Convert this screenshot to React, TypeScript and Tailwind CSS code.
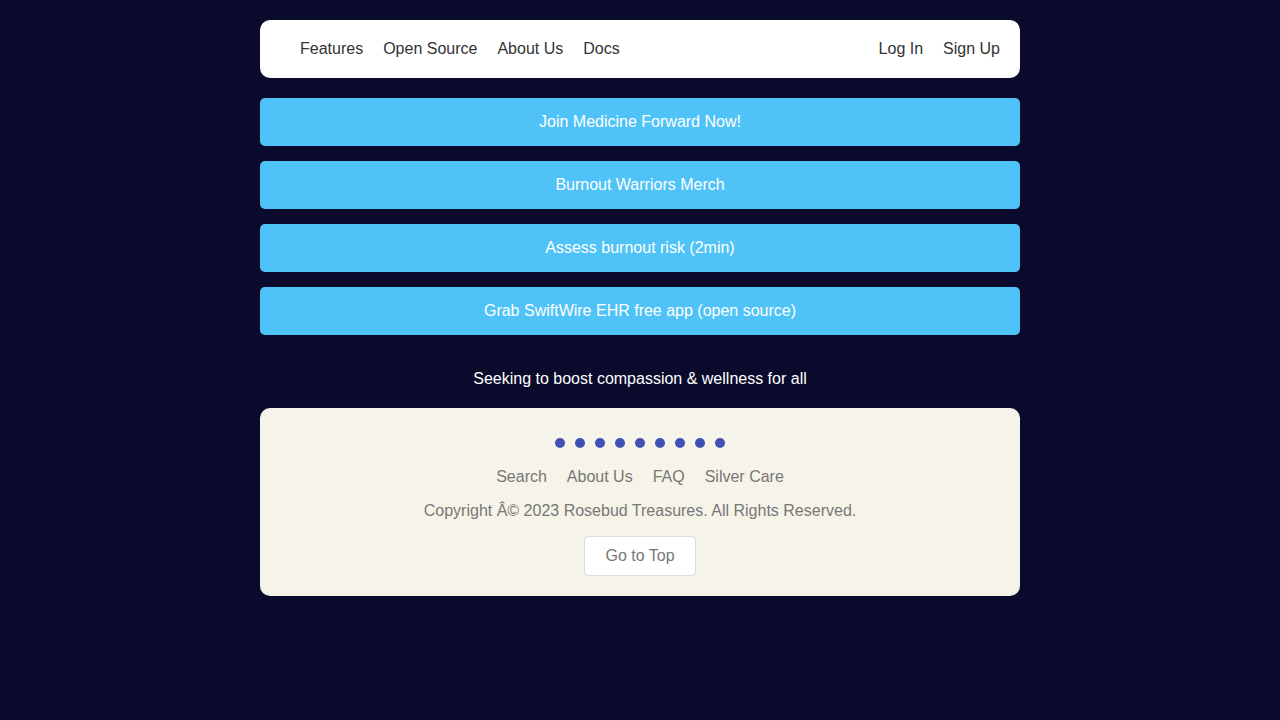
import React from "react";

const NAV_LEFT = ["Features", "Open Source", "About Us", "Docs"];
const NAV_RIGHT = ["Log In", "Sign Up"];

const ACTIONS = [
  "Join Medicine Forward Now!",
  "Burnout Warriors Merch",
  "Assess burnout risk (2min)",
  "Grab SwiftWire EHR free app (open source)",
];

const FOOTER_LINKS = ["Search", "About Us", "FAQ", "Silver Care"];

export default function App() {
  return (
    <div
      className="min-h-[720px] w-full bg-[#0a0b2c] pt-5"
      style={{ fontFamily: '"Liberation Sans", Arial, sans-serif' }}
    >
      <div className="mx-auto w-[760px]">
        {/* Top nav */}
        <nav className="flex h-[58px] items-center justify-between rounded-[10px] bg-white pl-10 pr-5 text-base text-[#333]">
          <div className="flex gap-5">
            {NAV_LEFT.map((item) => (
              <a key={item} href="#" className="leading-5">
                {item}
              </a>
            ))}
          </div>
          <div className="flex gap-5">
            {NAV_RIGHT.map((item) => (
              <a key={item} href="#" className="leading-5">
                {item}
              </a>
            ))}
          </div>
        </nav>

        {/* Action buttons */}
        <div className="mt-5 flex flex-col gap-[15px]">
          {ACTIONS.map((label) => (
            <a
              key={label}
              href="#"
              className="flex h-12 items-center justify-center rounded-[5px] bg-[#4fc3f7] text-base text-white"
            >
              {label}
            </a>
          ))}
        </div>

        <p className="mt-[34px] text-center text-base leading-5 text-white">
          Seeking to boost compassion &amp; wellness for all
        </p>

        {/* Footer */}
        <footer className="mt-[19px] flex flex-col items-center rounded-[10px] bg-[#f6f4e8] pb-5 pt-[30px] text-base text-[#777]">
          <div className="flex gap-[10px]">
            {Array.from({ length: 9 }).map((_, i) => (
              <span key={i} className="h-[10px] w-[10px] rounded-full bg-[#3f51b5]" />
            ))}
          </div>
          <div className="mt-[19px] flex gap-5 leading-5">
            {FOOTER_LINKS.map((item) => (
              <a key={item} href="#">
                {item}
              </a>
            ))}
          </div>
          <p className="mt-[14px] leading-5">
            Copyright Â© 2023 Rosebud Treasures. All Rights Reserved.
          </p>
          <button className="mt-[15px] h-10 w-28 rounded border border-[#ddd] bg-white text-base text-[#777]">
            Go to Top
          </button>
        </footer>
      </div>
    </div>
  );
}
